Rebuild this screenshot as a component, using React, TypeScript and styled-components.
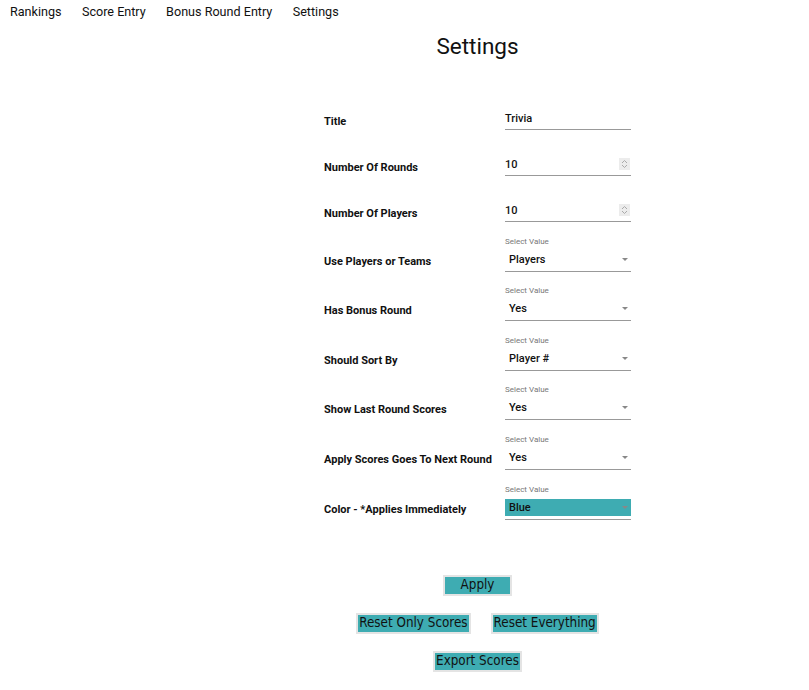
import React from "react";
import styled, { createGlobalStyle } from "styled-components";

const Global = createGlobalStyle`
  html, body { margin: 0; padding: 0; background: #fff; }
  body { font-family: Roboto, "Liberation Sans", sans-serif; color: #111; }
`;

const Page = styled.div`
  width: 809px;
  min-height: 690px;
`;

const Nav = styled.nav`
  display: flex;
  height: 24px;
  align-items: center;
  padding-left: 10px;
  gap: 20.4px;
`;

const NavItem = styled.a`
  font-size: 12.6px;
  color: #111;
  text-decoration: none;
  line-height: 24px;
  cursor: pointer;
`;

const Main = styled.main`
  margin-left: 146px;
  display: flex;
  flex-direction: column;
  align-items: center;
`;

const Heading = styled.h1`
  font-size: 22.5px;
  font-weight: 400;
  margin: 10px 0 0;
  line-height: 24px;
`;

const Form = styled.div`
  display: flex;
  flex-direction: column;
  margin-top: 50px;
`;

const Row = styled.div<{ $h: number }>`
  display: flex;
  align-items: flex-end;
  height: ${(p) => p.$h}px;
`;

const Label = styled.div<{ $pb: number }>`
  width: 181px;
  font-size: 11px;
  font-weight: 700;
  line-height: 14px;
  padding-bottom: ${(p) => p.$pb}px;
`;

const Field = styled.div`
  width: 126px;
  display: flex;
  flex-direction: column;
`;

const Caption = styled.div`
  font-size: 8px;
  color: #777;
  line-height: 10px;
  margin-bottom: 4px;
`;

const Box = styled.div<{ $pb: number }>`
  border-bottom: 1px solid #999;
  padding-bottom: ${(p) => p.$pb}px;
`;

const InputLine = styled.div`
  position: relative;
  display: flex;
  align-items: center;
  height: 18px;
  font-size: 11px;
  font-weight: 500;
`;

const Spinner = styled.span`
  position: absolute;
  right: 1px;
  top: 3px;
  width: 11px;
  height: 12px;
  background: #ececec;
  display: flex;
  align-items: center;
  justify-content: center;
`;

const SelectLine = styled.div<{ $bg?: string }>`
  position: relative;
  display: flex;
  align-items: center;
  height: 17px;
  padding-left: 4px;
  font-size: 11px;
  font-weight: 500;
  background: ${(p) => p.$bg || "transparent"};
`;

const Arrow = styled.span`
  position: absolute;
  right: 3px;
  top: 7px;
  width: 0;
  height: 0;
  border-left: 3px solid transparent;
  border-right: 3px solid transparent;
  border-top: 3px solid #888;
`;

const Actions = styled.div`
  display: flex;
  flex-direction: column;
  align-items: center;
  margin-top: 55px;
  gap: 17px;
`;

const ButtonRow = styled.div`
  display: flex;
  gap: 20px;
`;

const Button = styled.button<{ $w?: number }>`
  font-family: "DejaVu Sans Condensed", "DejaVu Sans", sans-serif;
  font-size: 13.33px;
  color: #111;
  background: #3eacb2;
  border: 2px solid #e4e4e4;
  height: 21px;
  padding: 0 1px;
  line-height: 16px;
  cursor: pointer;
  ${(p) => (p.$w ? `width: ${p.$w}px;` : "")}
`;

const SpinIcon = () => (
  <svg width="7" height="10" viewBox="0 0 7 10">
    <path d="M1 4 L3.5 1.5 L6 4" stroke="#aaa" strokeWidth="1" fill="none" />
    <path d="M1 6 L3.5 8.5 L6 6" stroke="#aaa" strokeWidth="1" fill="none" />
  </svg>
);

const textRows = [
  { label: "Title", value: "Trivia", spin: false },
  { label: "Number Of Rounds", value: "10", spin: true },
  { label: "Number Of Players", value: "10", spin: true },
];

const selectRows = [
  { label: "Use Players or Teams", value: "Players" },
  { label: "Has Bonus Round", value: "Yes" },
  { label: "Should Sort By", value: "Player #" },
  { label: "Show Last Round Scores", value: "Yes" },
  { label: "Apply Scores Goes To Next Round", value: "Yes" },
  { label: "Color - *Applies Immediately", value: "Blue", bg: "#3eacb2" },
];

export default function App() {
  return (
    <Page>
      <Global />
      <Nav>
        <NavItem>Rankings</NavItem>
        <NavItem>Score Entry</NavItem>
        <NavItem>Bonus Round Entry</NavItem>
        <NavItem>Settings</NavItem>
      </Nav>
      <Main>
        <Heading>Settings</Heading>
        <Form>
          {textRows.map((r, i) => (
            <Row key={r.label} $h={i === 0 ? 22 : 46}>
              <Label $pb={1}>{r.label}</Label>
              <Field>
                <Box $pb={2}>
                  <InputLine>
                    {r.value}
                    {r.spin && (
                      <Spinner>
                        <SpinIcon />
                      </Spinner>
                    )}
                  </InputLine>
                </Box>
              </Field>
            </Row>
          ))}
          {selectRows.map((r) => (
            <Row key={r.label} $h={49.6}>
              <Label $pb={3}>{r.label}</Label>
              <Field>
                <Caption>Select Value</Caption>
                <Box $pb={3}>
                  <SelectLine $bg={r.bg}>
                    {r.value}
                    <Arrow />
                  </SelectLine>
                </Box>
              </Field>
            </Row>
          ))}
        </Form>
        <Actions>
          <Button $w={69}>Apply</Button>
          <ButtonRow>
            <Button>Reset Only Scores</Button>
            <Button>Reset Everything</Button>
          </ButtonRow>
          <Button>Export Scores</Button>
        </Actions>
      </Main>
    </Page>
  );
}
